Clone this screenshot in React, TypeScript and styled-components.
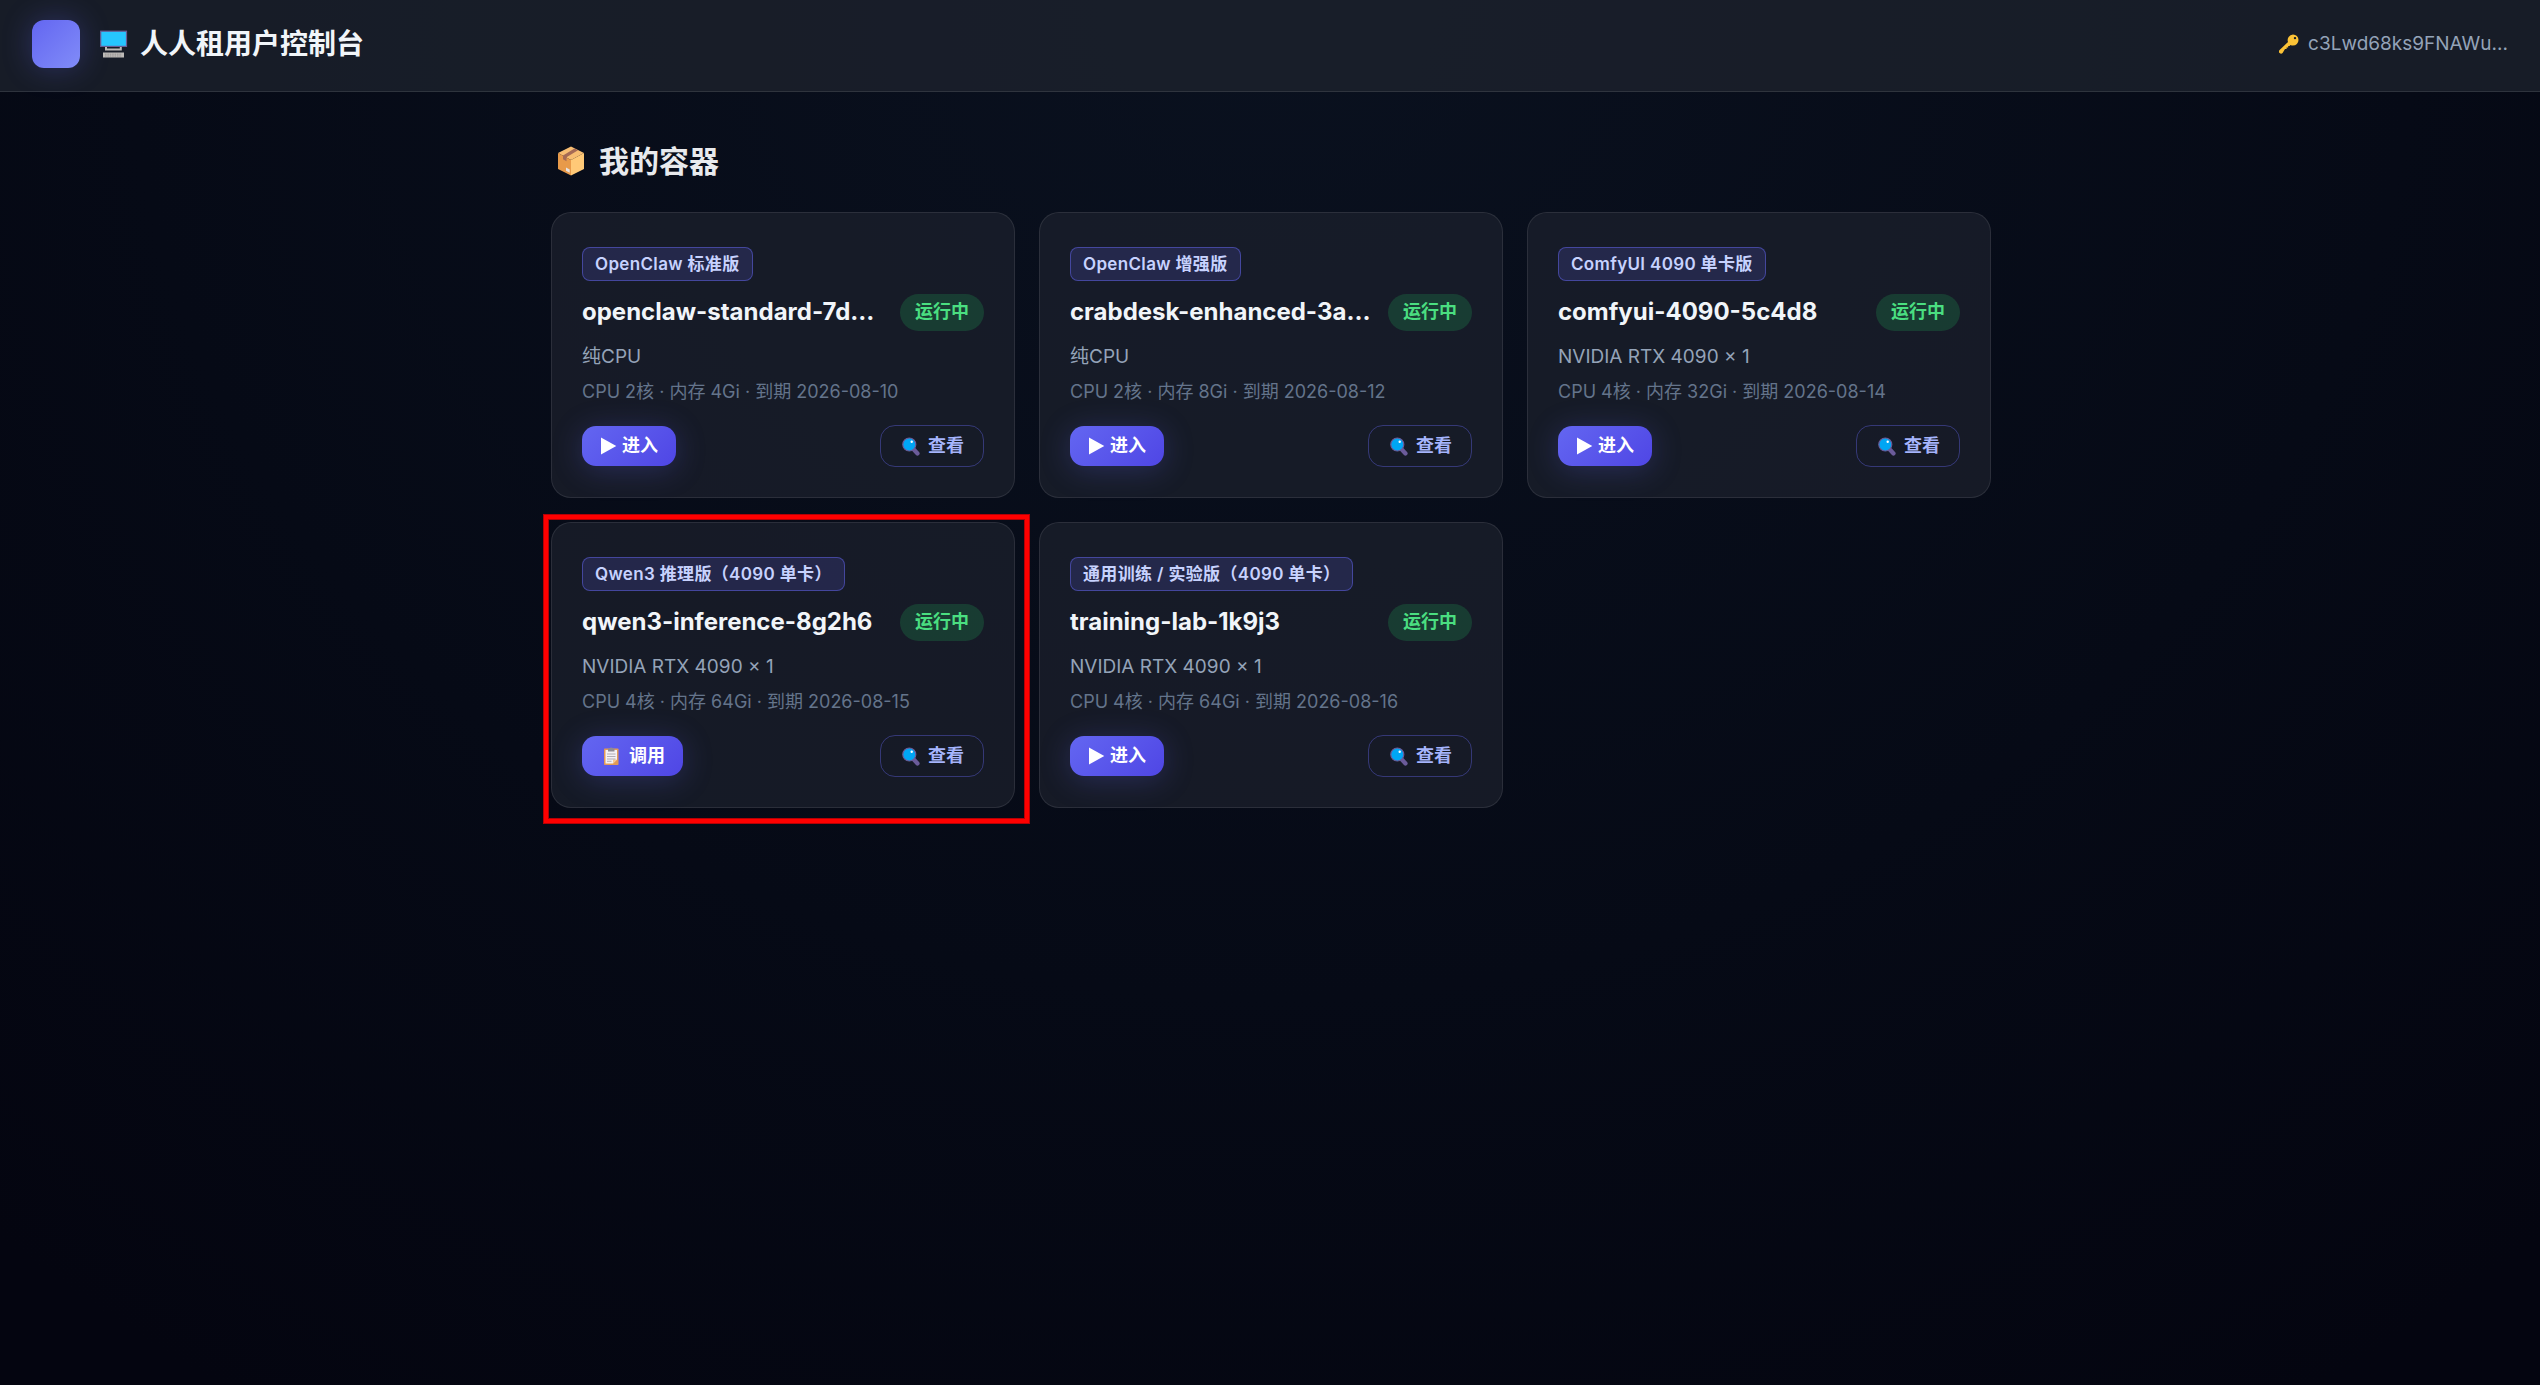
import React from "react";
import styled, { createGlobalStyle, css } from "styled-components";

const GlobalStyle = createGlobalStyle`
  *, *::before, *::after { box-sizing: border-box; }
  html { min-height: 100%; background: #04050f; }
  body {
    margin: 0;
    min-height: 100vh;
    color: #f1f5f9;
    font-family: Inter, "Noto Sans CJK SC", sans-serif;
    background: radial-gradient(ellipse 75% 120% at 50% 0%, #0a111f 0%, #060a16 60%, #040510 100%);
  }
  h1, h2, h3, p { margin: 0; }
  button { font-family: inherit; cursor: pointer; }
`;

const Header = styled.header`
  display: flex;
  align-items: center;
  justify-content: space-between;
  padding: 20px 32px 23px;
  background: rgba(30, 35, 46, 0.75);
  border-bottom: 1px solid rgba(255, 255, 255, 0.1);
`;

const Brand = styled.div`
  display: flex;
  align-items: center;
  gap: 20px;
`;

const Logo = styled.div`
  width: 48px;
  height: 48px;
  border-radius: 12px;
  background: linear-gradient(135deg, #6366f1, #818cf8);
  box-shadow: 0 0 30px rgba(99, 102, 241, 0.3);
`;

const Title = styled.h1`
  display: flex;
  align-items: center;
  gap: 12px;
  font-size: 28px;
  line-height: 40px;
  font-weight: 700;
`;

const KeyLabel = styled.div`
  display: flex;
  align-items: center;
  gap: 9px;
  font-size: 19px;
  line-height: 28px;
  color: #94a3b8;
`;

const Main = styled.main`
  max-width: 1442px;
  margin: 0 auto;
  padding: 47px 0 47px 2px;
`;

const SectionTitle = styled.h2`
  display: flex;
  align-items: center;
  gap: 15px;
  padding-left: 7px;
  margin-bottom: 29px;
  font-size: 30px;
  line-height: 44px;
  font-weight: 700;
  color: #e8eaed;
`;

const Grid = styled.div`
  display: grid;
  grid-template-columns: repeat(3, minmax(0, 1fr));
  gap: 24px;
`;

const Card = styled.article`
  position: relative;
  display: flex;
  flex-direction: column;
  align-items: flex-start;
  padding: 34px 30px 30px;
  border: 1px solid rgba(255, 255, 255, 0.09);
  border-radius: 20px;
  background: rgba(30, 34, 46, 0.68);
`;

const Highlight = styled.div`
  position: absolute;
  inset: -8px -15px -16px -8px;
  border: 4px solid #ff0000;
  box-shadow: 0 0 0 1px #b40005, inset 0 0 0 1px #b40005;
  pointer-events: none;
`;

const Tag = styled.span`
  padding: 4px 12px;
  border: 1px solid rgba(99, 102, 241, 0.5);
  border-radius: 8px;
  background: rgba(99, 102, 241, 0.18);
  color: #c7d2fe;
  font-size: 17px;
  line-height: 24px;
  font-weight: 600;
  letter-spacing: 0.02em;
`;

const NameRow = styled.div`
  display: flex;
  align-items: flex-start;
  justify-content: space-between;
  gap: 16px;
  width: 100%;
  margin-top: 13px;
`;

const Name = styled.h3`
  font-size: 24px;
  line-height: 35px;
  font-weight: 700;
  white-space: nowrap;
`;

const Status = styled.span`
  flex: none;
  padding: 0 15px 2px;
  border-radius: 20px;
  background: rgba(34, 197, 94, 0.2);
  color: #4ade80;
  font-size: 18px;
  line-height: 35px;
  font-weight: 600;
`;

const Gpu = styled.p`
  margin-top: 12px;
  font-size: 19px;
  line-height: 28px;
  color: #94a3b8;
`;

const Meta = styled.p`
  margin-top: 7px;
  font-size: 18px;
  line-height: 28px;
  color: #64748b;
`;

const Actions = styled.div`
  display: flex;
  align-items: center;
  justify-content: space-between;
  width: 100%;
  margin-top: 19px;
`;

const Button = styled.button<{ $primary?: boolean; $wide?: boolean }>`
  display: flex;
  align-items: center;
  font-size: 18px;
  line-height: 26px;
  font-weight: 700;
  ${(p) =>
    p.$primary
      ? css`
          gap: ${p.$wide ? 10 : 5}px;
          height: 40px;
          padding: 0 18px 0 ${p.$wide ? 22 : 18}px;
          border: 0;
          border-radius: 14px;
          color: #ffffff;
          background: linear-gradient(135deg, #6366f1, #4f46e5);
          box-shadow: 0 4px 30px rgba(99, 102, 241, 0.25);
        `
      : css`
          gap: 8px;
          height: 42px;
          padding: 0 19px 0 21px;
          border: 1px solid rgba(99, 102, 241, 0.4);
          border-radius: 15px;
          color: #a5b4fc;
          background: transparent;
        `}
`;

const ComputerIcon = () => (
  <svg width="28" height="28" viewBox="0 0 28 28" aria-hidden="true">
    <rect x="0.7" y="1.2" width="25.8" height="15.2" fill="#26c6ff" stroke="#6a5c95" strokeWidth="1.2" />
    <path d="M6 17v2.6h14.8V17" fill="none" stroke="#bdbab7" strokeWidth="2" />
    <rect x="3" y="22.5" width="21" height="5" fill="#bdbab7" />
    <path d="M5 24.2h17M5 26h17" stroke="#94908e" strokeWidth="0.9" strokeDasharray="1.5 0.9" />
  </svg>
);

const KeyIcon = () => (
  <svg width="20" height="20" viewBox="0 0 20 20" aria-hidden="true">
    <path
      fillRule="evenodd"
      d="M14 0.5a5.5 5.5 0 0 1 0 11c-.9 0-1.700-.2-2.500-.6l-1 1H9.200v1.500H7.600V15H6l-2.400 4a2.100 2.100 0 0 1-3-3l8.400-8A5.600 5.600 0 0 1 14 .5zm2 2.400a1.200 1.200 0 1 0 0 2.400 1.200 1.200 0 0 0 0-2.400z"
      fill="#fbc236"
    />
  </svg>
);

const BoxIcon = () => (
  <svg width="26" height="30" viewBox="0 0 26 30" aria-hidden="true">
    <path d="M13 0.500 26 7 13 14 0 7z" fill="#f7bd72" />
    <path d="M0 7l13 7v15.500L0 23z" fill="#e89a4a" />
    <path d="M26 7l-13 7v15.500L26 23z" fill="#ffc977" />
    <path d="M16.500 2.500 20 4.200 8.500 11.300v4L5 13.300V9.500z" fill="#a56a55" />
    <path d="M8 21.500l3.700 2v3.200l-3.700-2z" fill="#e8e3e0" />
  </svg>
);

const SearchIcon = () => (
  <svg width="18" height="19" viewBox="0 0 18 19" aria-hidden="true">
    <path d="M11.800 12.500l3.700 4" stroke="#6b5b9a" strokeWidth="4.200" strokeLinecap="round" />
    <circle cx="7.300" cy="7.500" r="6.500" fill="#00a6f4" stroke="#6b5b9a" strokeWidth="1.200" />
    <circle cx="9.700" cy="4.700" r="1.200" fill="#ffffff" />
  </svg>
);

const ClipboardIcon = () => (
  <svg width="15" height="19" viewBox="0 0 15 19" aria-hidden="true">
    <rect x="0" y="1.500" width="14.500" height="16.500" rx="0.800" fill="#e39a56" />
    <path d="M1.500 3h11.500v9.500L9 16.500H1.500z" fill="#f4f1f5" />
    <path d="M9 16.500v-4h4z" fill="#fbc78d" />
    <path d="M4 1.500h1.700a1.600 1.600 0 0 1 3 0h1.800V4.500H4z" fill="#8f8c94" />
    <path d="M3 7h8.500M3 9.500h8.500M3 12h8.500M3 14.300h4.500" stroke="#a9a6b0" strokeWidth="0.900" />
  </svg>
);

const PlayIcon = () => (
  <svg width="17" height="18" viewBox="0 0 17 18" aria-hidden="true">
    <path d="M1 0.500 16.300 9 1 17.500z" fill="#ffffff" />
  </svg>
);

interface Container {
  tag: string;
  name: string;
  gpu: string;
  meta: string;
  invoke?: boolean;
}

const containers: Container[] = [
  { tag: "OpenClaw 标准版", name: "openclaw-standard-7d…", gpu: "纯CPU", meta: "CPU 2核 · 内存 4Gi · 到期 2026-08-10" },
  { tag: "OpenClaw 增强版", name: "crabdesk-enhanced-3a…", gpu: "纯CPU", meta: "CPU 2核 · 内存 8Gi · 到期 2026-08-12" },
  { tag: "ComfyUI 4090 单卡版", name: "comfyui-4090-5c4d8", gpu: "NVIDIA RTX 4090 × 1", meta: "CPU 4核 · 内存 32Gi · 到期 2026-08-14" },
  { tag: "Qwen3 推理版（4090 单卡）", name: "qwen3-inference-8g2h6", gpu: "NVIDIA RTX 4090 × 1", meta: "CPU 4核 · 内存 64Gi · 到期 2026-08-15", invoke: true },
  { tag: "通用训练 / 实验版（4090 单卡）", name: "training-lab-1k9j3", gpu: "NVIDIA RTX 4090 × 1", meta: "CPU 4核 · 内存 64Gi · 到期 2026-08-16" },
];

const ContainerCard = ({ item }: { item: Container }) => (
  <Card>
    <Tag>{item.tag}</Tag>
    <NameRow>
      <Name>{item.name}</Name>
      <Status>运行中</Status>
    </NameRow>
    <Gpu>{item.gpu}</Gpu>
    <Meta>{item.meta}</Meta>
    <Actions>
      <Button type="button" $primary $wide={item.invoke}>
        {item.invoke ? <ClipboardIcon /> : <PlayIcon />}
        {item.invoke ? "调用" : "进入"}
      </Button>
      <Button type="button">
        <SearchIcon />
        查看
      </Button>
    </Actions>
    {item.invoke && <Highlight />}
  </Card>
);

export default function App() {
  return (
    <>
      <GlobalStyle />
      <Header>
        <Brand>
          <Logo />
          <Title>
            <ComputerIcon />
            人人租用户控制台
          </Title>
        </Brand>
        <KeyLabel>
          <KeyIcon />
          c3Lwd68ks9FNAWu...
        </KeyLabel>
      </Header>
      <Main>
        <SectionTitle>
          <BoxIcon />
          我的容器
        </SectionTitle>
        <Grid>
          {containers.map((item) => (
            <ContainerCard key={item.name} item={item} />
          ))}
        </Grid>
      </Main>
    </>
  );
}
